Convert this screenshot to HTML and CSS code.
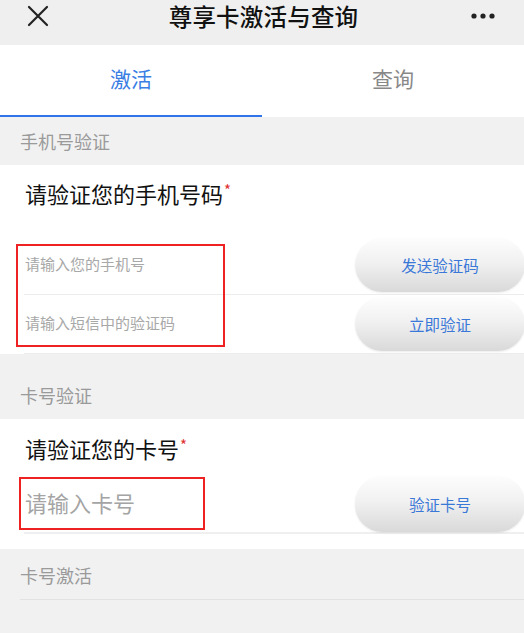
FILE: index.html
```html
<!DOCTYPE html>
<html lang="zh-CN">
<head>
<meta charset="utf-8">
<title>尊享卡激活与查询</title>
<link rel="stylesheet" href="styles.css">
</head>
<body>
<div class="page">
  <header class="topbar">
    <span class="icon-close">
      <svg width="22" height="22" viewBox="0 0 22 22"><path d="M2 2 L20 20 M20 2 L2 20" stroke="#222" stroke-width="2.2" fill="none" stroke-linecap="round"/></svg>
    </span>
    <h1 class="title">尊享卡激活与查询</h1>
    <span class="icon-more">
      <svg width="26" height="8" viewBox="0 0 26 8"><circle cx="4" cy="4" r="2.6" fill="#222"/><circle cx="13" cy="4" r="2.6" fill="#222"/><circle cx="22" cy="4" r="2.6" fill="#222"/></svg>
    </span>
  </header>

  <nav class="tabs">
    <div class="tab active">激活</div>
    <div class="tab">查询</div>
  </nav>

  <div class="section-title first">手机号验证</div>
  <section class="card">
    <div class="card-head">请验证您的手机号码<span class="req">*</span></div>
    <div class="rows">
      <div class="row">
        <span class="ph">请输入您的手机号</span>
        <button class="pill">发送验证码</button>
      </div>
      <div class="row">
        <span class="ph">请输入短信中的验证码</span>
        <button class="pill">立即验证</button>
      </div>
      <div class="mark mark-phone"></div>
    </div>
  </section>

  <div class="section-title">卡号验证</div>
  <section class="card card-bottom">
    <div class="card-head head-2">请验证您的卡号<span class="req">*</span></div>
    <div class="rows">
      <div class="row row-card">
        <span class="ph ph-big">请输入卡号</span>
        <button class="pill pill-card">验证卡号</button>
      </div>
      <div class="mark mark-card"></div>
    </div>
  </section>

  <div class="section-title last">卡号激活</div>
  <div class="tail"></div>
</div>
</body>
</html>
```

FILE: styles.css
```css
* { box-sizing: border-box; }
html, body { margin: 0; padding: 0; }
body {
  background: #f1f1f1;
  font-family: "Noto Sans CJK SC", "Noto Sans", sans-serif;
  width: 524px;
  height: 633px;
  overflow: hidden;
}
.page { display: flex; flex-direction: column; }

.topbar {
  height: 45px;
  background: #efefef;
  display: flex;
  align-items: center;
  justify-content: space-between;
  padding: 0 28px 0 27px;
}
.icon-close { display: flex; margin-top: -14px; }
.icon-more { display: flex; margin-top: -14px; }
.title {
  margin: -14px 0 0 8px;
  font-size: 23.5px;
  font-weight: 500;
  color: #111;
  letter-spacing: 0.2px;
}

.tabs {
  height: 72px;
  background: #fff;
  display: flex;
}
.tab {
  flex: 1;
  display: flex;
  align-items: center;
  justify-content: center;
  font-size: 21px;
  color: #888;
  padding-bottom: 4px;
  border-bottom: 2px solid transparent;
}
.tab.active {
  color: #3a7ee4;
  border-bottom-color: #2f74ea;
}

.section-title {
  height: 48px;
  margin-top: 17px;
  display: flex;
  align-items: center;
  padding-left: 20px;
  font-size: 18px;
  color: #9a9a9a;
}
.section-title.first { margin-top: 0; }
.section-title.last {
  margin-top: 0;
  height: 51px;
  padding-top: 2px;
  border-bottom: 1px solid #e2e2e2;
  margin-left: 20px;
  padding-left: 0;
}

.card { background: #fff; }
.card-head {
  height: 71px;
  padding-left: 25px;
  padding-top: 10px;
  font-size: 22px;
  color: #111;
  line-height: 30px;
}
.head-2 { height: 53px; padding-top: 11px; }
.req {
  color: #e03030;
  font-size: 15px;
  font-weight: 400;
  vertical-align: 7px;
  margin-left: 1px;
}

.rows { position: relative; }
.row {
  height: 59px;
  margin-left: 24px;
  display: flex;
  align-items: center;
  justify-content: space-between;
  border-bottom: 1px solid #ececec;
}
.row-card { height: 62px; border-bottom-width: 2px; border-bottom-color: #efefef; }
.card-bottom { padding-bottom: 15px; }

.ph {
  font-size: 15px;
  color: #a8a8a8;
  padding-left: 1px;
  margin-top: -3px;
}
.ph-big { font-size: 22px; color: #a4a4a4; margin-top: 0; }

.pill {
  width: 170px;
  height: 54px;
  margin-right: -1px;
  border: none;
  border-radius: 27px;
  background: linear-gradient(180deg, #fdfdfd 0%, #f1f1f1 45%, #d9d9d9 100%);
  box-shadow: 0 1px 2px rgba(0,0,0,0.08);
  color: #3a78d8;
  font-family: "Noto Sans CJK SC", "Noto Sans", sans-serif;
  font-size: 15.5px;
  padding: 0;
}
.pill-card { height: 56px; margin-top: 4px; }

.mark {
  position: absolute;
  border: 2px solid #ee2222;
}
.mark-phone { left: 16px; top: 8px; width: 209px; height: 103px; }
.mark-card { left: 19px; top: 5px; width: 186px; height: 53px; }

.tail { height: 40px; }
```
